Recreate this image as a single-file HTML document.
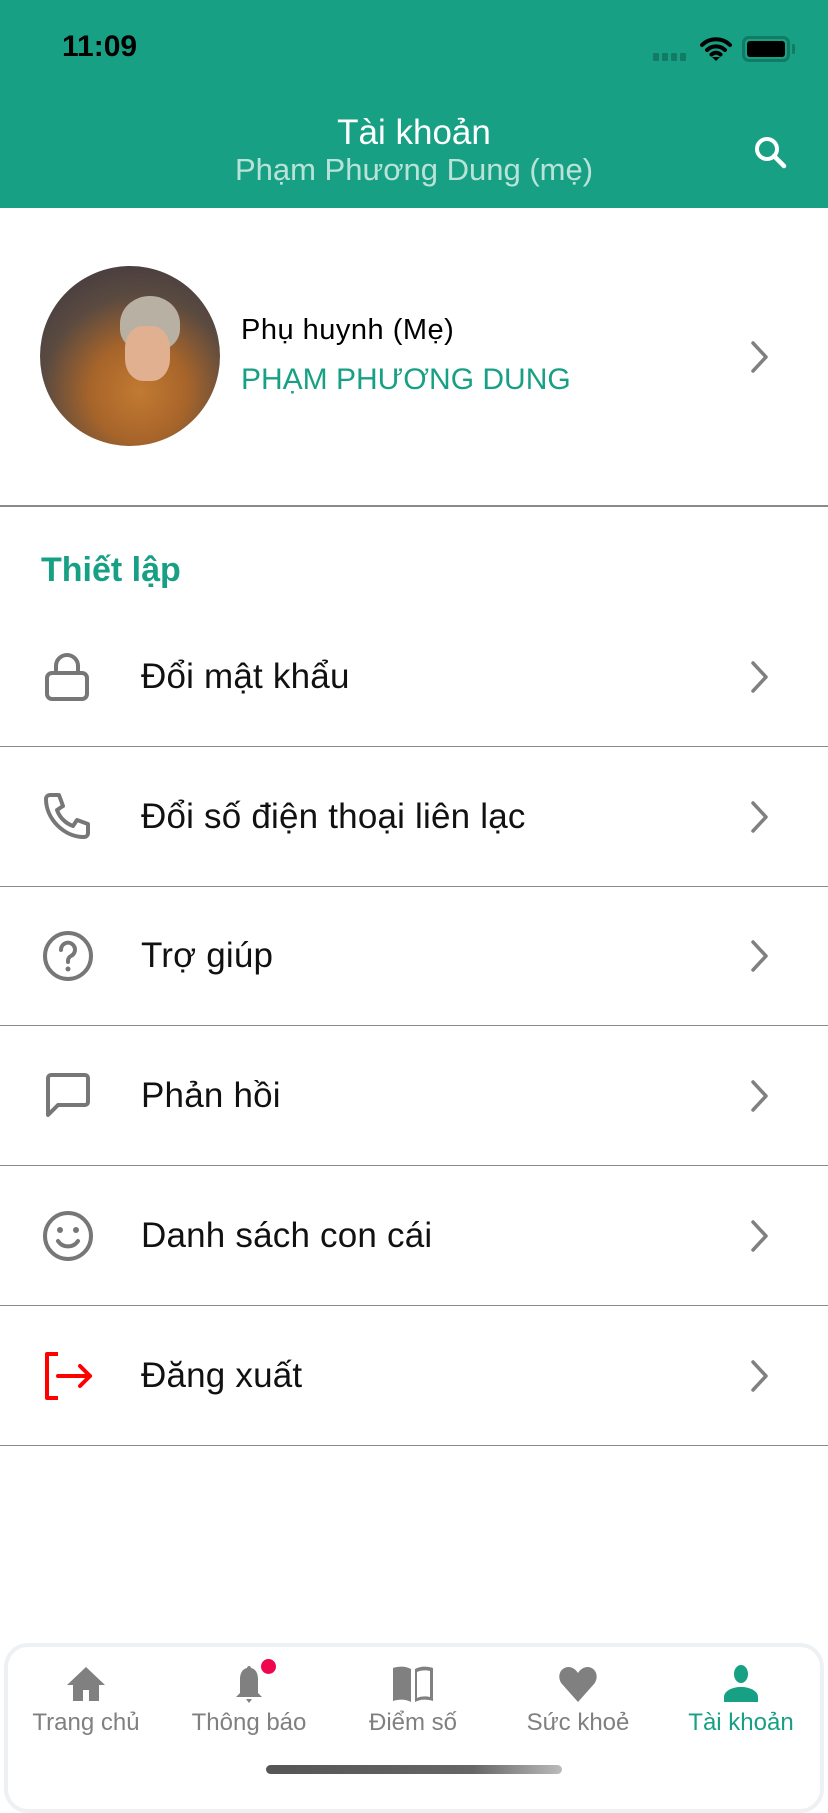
<!DOCTYPE html>
<html><head><meta charset="utf-8"><style>
*{margin:0;padding:0;box-sizing:border-box}
body{width:828px;height:1792px;background:#fff;font-family:"Liberation Sans",sans-serif;position:relative;overflow:hidden}
.abs{position:absolute}
.hdr{left:0;top:0;width:828px;height:208px;background:#18a085}
.row{position:absolute;left:0;width:828px;height:140px;border-bottom:1.5px solid #8a8a8a}
.row .t{position:absolute;left:141px;top:50%;transform:translateY(-50%);font-size:35px;color:#111;letter-spacing:0.2px}
.row svg.ic{position:absolute;left:40px;top:50%;transform:translateY(-50%)}
.chev{position:absolute;left:748px;top:50%;transform:translateY(-50%)}
.tab{position:absolute;top:1664px;width:160px;text-align:center;font-size:24px;color:#808080}
.tab svg{display:block;margin:0 auto 5px}
</style></head><body>
<div class="abs hdr"></div>
<div class="abs" style="left:62px;top:30px;font-size:30px;font-weight:bold;color:#000">11:09</div>
<div class="abs" style="left:653px;top:53px;display:flex;gap:3px"><i style="width:6px;height:8px;background:#127a65;border-radius:1px"></i><i style="width:6px;height:8px;background:#127a65;border-radius:1px"></i><i style="width:6px;height:8px;background:#127a65;border-radius:1px"></i><i style="width:6px;height:8px;background:#127a65;border-radius:1px"></i></div>
<svg class="abs" style="left:700px;top:36px" width="32" height="26" viewBox="0 0 32 26"><path d="M2 9a20 20 0 0 1 28 0M7 14a13 13 0 0 1 18 0M11.5 18.5a6.5 6.5 0 0 1 9 0" stroke="#000" stroke-width="4" fill="none" stroke-linecap="round"/><path d="M16 25l-4-4h8z" fill="#000"/></svg>
<div class="abs" style="left:742px;top:36px;width:48px;height:26px;border:3px solid #127a65;border-radius:7px;padding:2px"><div style="width:100%;height:100%;background:#000;border-radius:3px"></div></div>
<div class="abs" style="left:792px;top:44px;width:3px;height:10px;background:#127a65;border-radius:2px"></div>
<div class="abs" style="left:0;width:828px;top:113px;text-align:center;color:#fff;font-size:35px">Tài khoản</div>
<div class="abs" style="left:0;width:828px;top:152px;text-align:center;color:#b9e3d9;font-size:31px">Phạm Phương Dung (mẹ)</div>
<svg class="abs" style="left:753px;top:135px" width="36" height="36" viewBox="0 0 36 36"><circle cx="14" cy="14" r="10" stroke="#fff" stroke-width="4" fill="none"/><path d="M21 21l10 10" stroke="#fff" stroke-width="4.5" stroke-linecap="round"/></svg>
<div class="abs" style="left:40px;top:266px;width:180px;height:180px;border-radius:50%;background:radial-gradient(circle at 55% 70%,#c27a32 0,#a8652a 30%,#5a4a40 60%,#3a3440 100%);overflow:hidden">
<div class="abs" style="left:80px;top:30px;width:60px;height:55px;border-radius:50% 50% 40% 40%;background:#b9b0a4"></div>
<div class="abs" style="left:85px;top:60px;width:45px;height:55px;border-radius:40%;background:#e0b090"></div>
</div>
<div class="abs" style="left:241px;top:314px;font-size:29px;color:#000;letter-spacing:0.5px">Phụ huynh (Mẹ)</div>
<div class="abs" style="left:241px;top:363px;font-size:30px;color:#18a085">PHẠM PHƯƠNG DUNG</div>
<svg class="abs" style="left:748px;top:340px" width="24" height="34" viewBox="0 0 24 34"><path d="M5 3l13 14L5 31" stroke="#808080" stroke-width="3.5" fill="none" stroke-linecap="round" stroke-linejoin="round"/></svg>
<div class="abs" style="left:0;top:505px;width:828px;height:1.5px;background:#8a8a8a"></div>
<div class="abs" style="left:41px;top:551px;font-size:34px;font-weight:bold;color:#18a085">Thiết lập</div>

<div class="row" style="top:607px"><svg class="ic" width="56" height="56" viewBox="0 0 56 56"><rect x="7" y="24" width="40" height="26" rx="5" stroke="#777" stroke-width="4" fill="none"/><path d="M16 24v-7a11 11 0 0 1 22 0v7" stroke="#777" stroke-width="4" fill="none"/></svg><span class="t">Đổi mật khẩu</span><svg class="chev" width="24" height="34" viewBox="0 0 24 34"><path d="M5 3l13 14L5 31" stroke="#808080" stroke-width="3.5" fill="none" stroke-linecap="round" stroke-linejoin="round"/></svg></div>
<div class="row" style="top:747px"><svg class="ic" width="56" height="56" viewBox="0 0 56 56"><path d="M10 6h9l4 11-6 4a26 26 0 0 0 16 16l4-6 11 4v9a4 4 0 0 1-4 4C24 48 6 30 6 10a4 4 0 0 1 4-4z" stroke="#777" stroke-width="4" fill="none" stroke-linejoin="round"/></svg><span class="t">Đổi số điện thoại liên lạc</span><svg class="chev" width="24" height="34" viewBox="0 0 24 34"><path d="M5 3l13 14L5 31" stroke="#808080" stroke-width="3.5" fill="none" stroke-linecap="round" stroke-linejoin="round"/></svg></div>
<div class="row" style="top:886px"><svg class="ic" width="56" height="56" viewBox="0 0 56 56"><circle cx="28" cy="28" r="23" stroke="#777" stroke-width="4" fill="none"/><path d="M21 22a7 7 0 1 1 10 6c-2 1-3 3-3 5v1" stroke="#777" stroke-width="4" fill="none" stroke-linecap="round"/><circle cx="28" cy="41" r="2.5" fill="#777"/></svg><span class="t">Trợ giúp</span><svg class="chev" width="24" height="34" viewBox="0 0 24 34"><path d="M5 3l13 14L5 31" stroke="#808080" stroke-width="3.5" fill="none" stroke-linecap="round" stroke-linejoin="round"/></svg></div>
<div class="row" style="top:1026px"><svg class="ic" width="56" height="56" viewBox="0 0 56 56"><path d="M8 10a3 3 0 0 1 3-3h34a3 3 0 0 1 3 3v24a3 3 0 0 1-3 3H18L8 47z" stroke="#777" stroke-width="4" fill="none" stroke-linejoin="round"/></svg><span class="t">Phản hồi</span><svg class="chev" width="24" height="34" viewBox="0 0 24 34"><path d="M5 3l13 14L5 31" stroke="#808080" stroke-width="3.5" fill="none" stroke-linecap="round" stroke-linejoin="round"/></svg></div>
<div class="row" style="top:1166px"><svg class="ic" width="56" height="56" viewBox="0 0 56 56"><circle cx="28" cy="28" r="23" stroke="#777" stroke-width="4" fill="none"/><circle cx="20" cy="22" r="3" fill="#777"/><circle cx="36" cy="22" r="3" fill="#777"/><path d="M18 33a12 12 0 0 0 20 0" stroke="#777" stroke-width="4" fill="none" stroke-linecap="round"/></svg><span class="t">Danh sách con cái</span><svg class="chev" width="24" height="34" viewBox="0 0 24 34"><path d="M5 3l13 14L5 31" stroke="#808080" stroke-width="3.5" fill="none" stroke-linecap="round" stroke-linejoin="round"/></svg></div>
<div class="row" style="top:1306px"><svg class="ic" width="56" height="56" viewBox="0 0 56 56"><path d="M18 6H7v44h11" stroke="#f00" stroke-width="4" fill="none" stroke-linejoin="round"/><path d="M18 28h32M40 18l10 10-10 10" stroke="#f00" stroke-width="4" fill="none" stroke-linecap="round" stroke-linejoin="round"/></svg><span class="t">Đăng xuất</span><svg class="chev" width="24" height="34" viewBox="0 0 24 34"><path d="M5 3l13 14L5 31" stroke="#808080" stroke-width="3.5" fill="none" stroke-linecap="round" stroke-linejoin="round"/></svg></div>

<div class="abs" style="left:4px;top:1643px;width:820px;height:170px;border:4px solid #eef1f4;border-radius:24px"></div>
<div class="tab" style="left:6px"><svg width="42" height="40" viewBox="0 0 42 40"><path d="M21 3L2 21h6v16h10V26h6v11h10V21h6z" fill="#808080"/></svg>Trang chủ</div>
<div class="tab" style="left:169px"><svg width="42" height="40" viewBox="0 0 42 40"><path d="M21 2c-1 0-2 1-2 2-5 1-7 6-7 11v14l-4 4h26l-4-4V15c0-5-2-10-7-11 0-1-1-2-2-2zM18 35h6l-3 4z" fill="#808080"/></svg>Thông báo</div>
<div class="abs" style="left:261px;top:1659px;width:15px;height:15px;border-radius:50%;background:#f0064e"></div>
<div class="tab" style="left:333px"><svg width="46" height="40" viewBox="0 0 46 40"><path d="M3 4c6-2 13-2 18 1v33c-5-3-12-3-18-1zM25 5c5-3 12-3 18-1v33c-6-2-13-2-18 1z" fill="#808080"/><path d="M27 8v26c4-2 9-2 13-1V7c-4-1-9-1-13 1z" fill="#fff"/></svg>Điểm số</div>
<div class="tab" style="left:498px"><svg width="42" height="40" viewBox="0 0 42 40"><path d="M21 38L5 20C0 14 2 4 11 3c5 0 8 3 10 6 2-3 5-6 10-6 9 1 11 11 6 17z" fill="#808080"/></svg>Sức khoẻ</div>
<div class="tab" style="left:661px;color:#18a085"><svg width="42" height="40" viewBox="0 0 42 40"><ellipse cx="21" cy="10" rx="7" ry="9" fill="#18a085"/><path d="M4 38v-5c0-6 8-10 17-10s17 4 17 10v5z" fill="#18a085"/></svg>Tài khoản</div>
<div class="abs" style="left:266px;top:1765px;width:296px;height:9px;border-radius:5px;background:linear-gradient(90deg,#555,#666 70%,#bbb)"></div>
</body></html>
